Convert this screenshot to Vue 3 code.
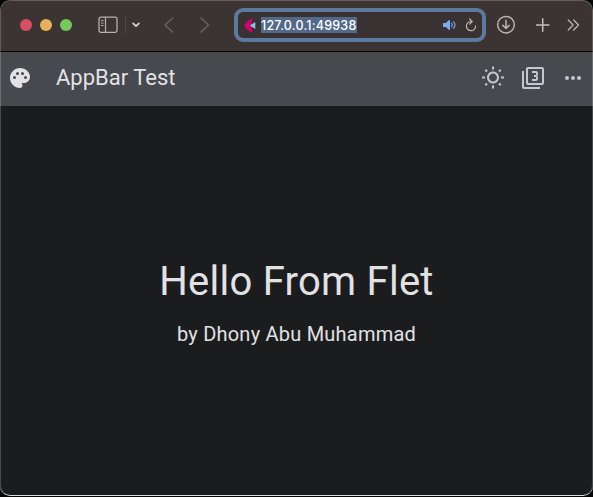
<script setup>
const address = '127.0.0.1:49938'
</script>

<template>
  <div class="window">
    <header class="toolbar">
      <div class="lights">
        <i class="red"></i><i class="amber"></i><i class="green"></i>
      </div>
      <svg class="sidebar" width="20" height="18" viewBox="0 0 20 18" fill="none" stroke="#b6b0af">
        <rect x="1" y="1.2" width="18" height="15.2" rx="1.8" stroke-width="1.3" />
        <path d="M7.5 1v15.4" stroke-width="1.2" />
        <path d="M3 4.500h2.500M3 7h2.500M3 9.500h2.500" stroke-width="1" />
      </svg>
      <span class="divider"></span>
      <svg class="chevron" width="8" height="6" viewBox="0 0 8 6" fill="none" stroke="#d8d4d3" stroke-width="1.7" stroke-linecap="round" stroke-linejoin="round">
        <path d="M1.1 1.3 4 4.2 6.9 1.3" />
      </svg>
      <svg class="back" width="10" height="16" viewBox="0 0 10 16" fill="none" stroke="#686261" stroke-width="1.5" stroke-linecap="round" stroke-linejoin="round">
        <path d="M8.500 1 1 8l7.500 7" />
      </svg>
      <svg class="forward" width="10" height="16" viewBox="0 0 10 16" fill="none" stroke="#686261" stroke-width="1.5" stroke-linecap="round" stroke-linejoin="round">
        <path d="M1 1l7.500 7L1 15" />
      </svg>
      <div class="address">
        <svg class="favicon" width="12" height="15" viewBox="0 0 12 15">
          <path d="M8 .5v3.300L5.500 7.500 8 11.200v3.300C6.500 14.300 5.200 13.400 4.300 12.500L1.100 9Q-.2 7.500 1.100 6L4.300 2.500C5.200 1.600 6.500.7 8 .5z" fill="#d6006f" />
          <path d="M8 3.800v7.400L5 7.500z" fill="#a50b63" />
          <path d="M11.300 4v7L5.800 7.500z" fill="#86c5e6" />
        </svg>
        <span class="url">{{ address }}</span>
        <svg class="speaker" width="14" height="12" viewBox="0 0 14 12">
          <path d="M0 4.100h2.700L6.200 1.100q.8-.5.8.4v9q0 .9-.8.4L2.700 7.900H0z" fill="#78acf3" />
          <g fill="none" stroke="#78acf3" stroke-width="1.100" stroke-linecap="round">
            <path d="M8.700 4.100q1.200 1.900 0 3.800" />
            <path d="M10.700 2.700q2.400 3.300 0 6.600" />
          </g>
        </svg>
        <svg class="reload" width="12" height="14" viewBox="0 0 12 14" fill="none" stroke="#b9b3b2" stroke-width="1.200" stroke-linecap="round" stroke-linejoin="round">
          <path d="M6.300 3.500A4.600 4.600 0 1 0 10.600 8M4.700 1l2.500 2.500L4.700 6" />
        </svg>
      </div>
      <svg class="download" width="20" height="20" viewBox="0 0 20 20" fill="none" stroke="#b9b3b2" stroke-width="1.500" stroke-linecap="round" stroke-linejoin="round">
        <circle cx="10" cy="9.700" r="8.300" />
        <path d="M10 5.300v8M6.900 10.400l3.100 3.100 3.100-3.100" />
      </svg>
      <svg class="plus" width="14" height="14" viewBox="0 0 14 14" fill="none" stroke="#c4bfbe" stroke-width="1.500" stroke-linecap="round">
        <path d="M6.700 .8v12.400M.5 7h12.400" />
      </svg>
      <svg class="more" width="13" height="12" viewBox="0 0 13 12" fill="none" stroke="#b9b3b2" stroke-width="1.300" stroke-linecap="round" stroke-linejoin="round">
        <path d="M1.300 1l4.800 5-4.800 5M6.700 1l4.800 5-4.800 5" />
      </svg>
    </header>

    <nav class="appbar">
      <svg class="palette" width="24" height="24" viewBox="0 0 24 24" fill="#e2e2e5">
        <path fill-rule="evenodd" d="M12 2C6.490 2 2 6.490 2 12s4.490 10 10 10c1.380 0 2.500-1.120 2.500-2.500 0-.61-.23-1.200-.64-1.670-.08-.1-.13-.21-.13-.33 0-.28.22-.5.5-.5H16c3.310 0 6-2.690 6-6 0-4.960-4.490-9-10-9zM6.500 13a1.500 1.500 0 1 1 0-3 1.500 1.500 0 0 1 0 3zm3-4a1.500 1.500 0 1 1 0-3 1.500 1.500 0 0 1 0 3zm5 0a1.500 1.500 0 1 1 0-3 1.500 1.500 0 0 1 0 3zm3 4a1.500 1.500 0 1 1 0-3 1.500 1.500 0 0 1 0 3z" />
      </svg>
      <h1>AppBar Test</h1>
      <div class="actions">
        <svg width="24" height="24" viewBox="0 0 24 24" fill="#c3c7cf">
          <path d="M6.76 4.84l-1.8-1.79-1.41 1.41 1.79 1.79 1.42-1.41zM4 10.5H1v2h3v-2zm9-9.95h-2V3.5h2V.55zm7.45 3.91l-1.41-1.41-1.79 1.79 1.41 1.41 1.79-1.79zm-3.21 13.7l1.79 1.8 1.41-1.41-1.8-1.79-1.4 1.4zM20 10.5v2h3v-2h-3zm-8-5c-3.31 0-6 2.69-6 6s2.69 6 6 6 6-2.69 6-6-2.69-6-6-6zm0 10c-2.21 0-4-1.79-4-4s1.79-4 4-4 4 1.790 4 4-1.790 4-4 4zm-1 6.950h2V19.500h-2v2.950zm-7.450-3.910l1.410 1.410 1.790-1.800-1.410-1.410-1.790 1.800z" />
        </svg>
        <svg width="24" height="24" viewBox="0 0 24 24" fill="#c3c7cf">
          <path d="M21 1H7c-1.100 0-2 .9-2 2v14c0 1.100.9 2 2 2h14c1.100 0 2-.9 2-2V3c0-1.100-.9-2-2-2zm0 16H7V3h14v14zM3 5H1v16c0 1.100.9 2 2 2h16v-2H3V5zm14 8v-1.500c0-.83-.67-1.500-1.500-1.500.83 0 1.500-.67 1.500-1.500V7c0-1.110-.9-2-2-2h-4v2h4v2h-2v2h2v2h-4v2h4c1.100 0 2-.89 2-2z" />
        </svg>
        <svg width="24" height="24" viewBox="0 0 24 24" fill="#c3c7cf">
          <circle cx="6" cy="12" r="2" /><circle cx="12" cy="12" r="2" /><circle cx="18" cy="12" r="2" />
        </svg>
      </div>
    </nav>

    <main class="content">
      <p class="headline">Hello From Flet</p>
      <p class="author">by Dhony Abu Muhammad</p>
    </main>
  </div>
</template>

<style>
body {
  background: #050505;
}
</style>

<style scoped>
.window {
  box-sizing: border-box;
  width: 593px;
  height: 496px;
  display: flex;
  flex-direction: column;
  position: relative;
  overflow: hidden;
  border-radius: 10px;
  background: #1b1c1e;
  color: #e2e2e5;
  font-family: Roboto, sans-serif;
  border-bottom: 1px solid #dedede;
}
.window::after {
  content: '';
  position: absolute;
  inset: 0;
  border: 1px solid rgba(255, 255, 255, 0.2);
  border-bottom: 0;
  border-radius: 10px;
  pointer-events: none;
}
svg {
  display: block;
  flex: none;
}
.toolbar {
  box-sizing: border-box;
  height: 52px;
  flex: none;
  display: flex;
  align-items: center;
  padding: 0 13px 1px 20px;
  background: #3b3433;
  border-bottom: 1px solid #000;
}
.lights {
  display: flex;
  gap: 8px;
}
.lights i {
  width: 12px;
  height: 12px;
  border-radius: 50%;
}
.red { background: #d84f64; }
.amber { background: #e5b35b; }
.green { background: #76c95c; }
.sidebar { margin-left: 26px; }
.divider {
  width: 1px;
  height: 18px;
  margin-left: 7px;
  background: #4d4746;
}
.chevron { margin-left: 6px; }
.back { margin-left: 24px; }
.forward { margin-left: 26px; }
.address {
  box-sizing: border-box;
  width: 252px;
  height: 34px;
  margin-left: 24px;
  flex: none;
  display: flex;
  align-items: center;
  padding: 0 5px 0 6px;
  border: 4px solid #5b7a9d;
  border-radius: 9px;
  background: #3a3232;
}
.url {
  box-sizing: border-box;
  width: 96px;
  height: 16px;
  margin-left: 5px;
  background: #526989;
  color: #fff;
  font: 550 12.500px/17px Inter, sans-serif;
  letter-spacing: 0.22px;
  white-space: nowrap;
}
.speaker { margin-left: auto; }
.reload { margin-left: 8px; }
.download { margin-left: 10px; }
.plus { margin-left: 20px; }
.more { margin-left: auto; }
.appbar {
  height: 54px;
  flex: none;
  display: flex;
  align-items: center;
  padding: 0 8px;
  background: #46494d;
}
.palette { margin-top: -2px; }
h1 {
  margin: -2px 0 0 24px;
  font-size: 22px;
  line-height: 28px;
  font-weight: 400;
}
.actions {
  display: flex;
  gap: 16px;
  margin: -2px 0 0 auto;
}
.content {
  flex: 1;
  display: flex;
  flex-direction: column;
  align-items: center;
  justify-content: center;
  gap: 14px;
  padding-top: 5px;
}
p {
  margin: 0;
  white-space: nowrap;
}
.headline {
  font-size: 40px;
  line-height: 48px;
  letter-spacing: 0.25px;
}
.author {
  font-size: 20px;
  line-height: 28px;
  letter-spacing: 0.22px;
}
</style>
